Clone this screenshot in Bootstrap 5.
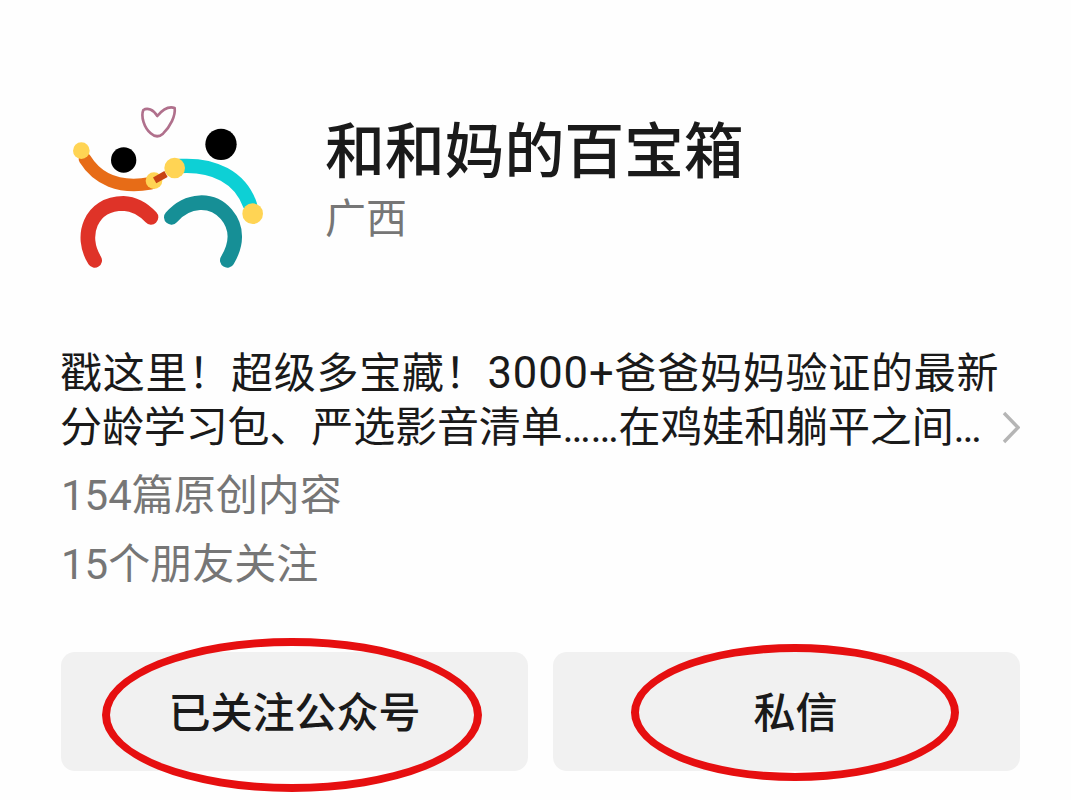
<!DOCTYPE html>
<html lang="zh-CN">
<head>
  <meta charset="UTF-8" />
  <meta name="viewport" content="width=device-width, initial-scale=1.0" />
  <title>和和妈的百宝箱</title>
  <link href="https://cdn.jsdelivr.net/npm/bootstrap@5.3.0/dist/css/bootstrap.min.css" rel="stylesheet" />
  <style>
    body {
      background-color: #fefefe;
      color: #1a1a1a;
      font-family: Roboto, "Noto Sans CJK SC", sans-serif;
      font-size: 42px;
    }

    .profile {
      height: 800px;
      padding: 90px 51px 0 61px;
    }

    .profile-head {
      height: 257px;
    }

    .avatar {
      width: 220px;
      height: 190px;
      margin: 5px 45px 0 -1px;
    }

    .account-name {
      font-size: 60px;
      font-weight: 500;
      line-height: 80px;
      letter-spacing: -0.2px;
      margin: 23px 0 0;
    }

    .region {
      font-size: 41px;
      line-height: 52px;
      color: #767676;
    }

    .intro {
      line-height: 54px;
      white-space: nowrap;
    }

    .intro-first {
      height: 54px;
      margin-left: -1px;
      letter-spacing: 0.75px;
    }

    .intro-first span {
      font-size: 43.5px;
      letter-spacing: 0.9px;
    }

    .intro-second {
      margin-left: -1px;
      letter-spacing: -0.12px;
    }

    .meta {
      height: 69px;
      line-height: 69px;
      color: #767676;
      white-space: nowrap;
    }

    .meta-list {
      padding-top: 6px;
    }

    .actions {
      gap: 25px;
      margin-top: 53px;
    }

    .btn-action {
      height: 119px;
      border: 0;
      border-radius: 14px;
      background-color: #f1f1f1;
      color: #1a1a1a;
      font-size: 42px;
      font-weight: 500;
      padding: 10px 0 6px;
    }

    .btn-message {
      padding-left: 18px;
    }

    .ring {
      border: 8px solid #e60f10;
      border-radius: 50%;
      pointer-events: none;
    }

    .ring-follow {
      left: 41px;
      top: -14px;
      width: 380px;
      height: 154px;
    }

    .ring-message {
      left: 78px;
      top: -8px;
      width: 328px;
      height: 137px;
    }
  </style>
</head>
<body>

  <main class="profile">
    <!-- Avatar e nome -->
    <header class="profile-head d-flex align-items-start">
      <svg class="avatar flex-shrink-0" viewBox="0 0 660 570" fill="none" stroke-linecap="round">
        <path d="M292 63 C280 43 262 37 250 45 C242 64 252 98 272 115 Q291 132 309 116 C331 94 347 63 344 39 C326 33 306 46 292 63Z" stroke="#b0708c" stroke-width="8" stroke-linejoin="round" />
        <circle cx="191" cy="195" r="38" fill="#000" />
        <circle cx="483" cy="148" r="47" fill="#000" />
        <path d="M75 192 C112 252 178 282 272 265" stroke="#e76c17" stroke-width="38" />
        <circle cx="64" cy="167" r="25" fill="#ffd454" />
        <circle cx="282" cy="257" r="25" fill="#ffd454" />
        <path d="M360 213 C462 207 541 247 570 330" stroke="#0dd0d5" stroke-width="43" />
        <circle cx="344" cy="219" r="31" fill="#ffd454" />
        <circle cx="578" cy="356" r="31" fill="#ffd454" />
        <path d="M284 256 L318 237" stroke="#c84314" stroke-width="20" stroke-linecap="butt" />
        <path d="M104 496 C58 424 91 325 190 325 Q236 327 273 367" stroke="#df3328" stroke-width="44" />
        <path d="M334 367 C383 311 457 309 499 358 C534 399 530 450 502 496" stroke="#168f96" stroke-width="44" />
      </svg>
      <div>
        <h1 class="account-name">和和妈的百宝箱</h1>
        <div class="region">广西</div>
      </div>
    </header>

    <!-- Descrição -->
    <section class="d-flex align-items-end justify-content-between">
      <div class="intro">
        <div class="intro-first">戳这里！超级多宝藏！<span>3000+</span>爸爸妈妈验证的最新</div>
        <div class="intro-second">分龄学习包、严选影音清单……在鸡娃和躺平之间…</div>
      </div>
      <svg class="flex-shrink-0 mb-2" width="18" height="38" viewBox="0 0 18 38" fill="none" stroke="#b5b5b5" stroke-width="3.4">
        <path d="M2 4 L16 18.500 L2 33" />
      </svg>
    </section>

    <div class="meta-list">
      <div class="meta">154篇原创内容</div>
      <div class="meta">15个朋友关注</div>
    </div>

    <!-- Botões -->
    <div class="actions d-flex">
      <div class="position-relative flex-fill w-50">
        <button type="button" class="btn btn-action w-100">已关注公众号</button>
        <span class="ring ring-follow position-absolute"></span>
      </div>
      <div class="position-relative flex-fill w-50">
        <button type="button" class="btn btn-action btn-message w-100">私信</button>
        <span class="ring ring-message position-absolute"></span>
      </div>
    </div>
  </main>

  <script src="https://cdn.jsdelivr.net/npm/bootstrap@5.3.0/dist/js/bootstrap.bundle.min.js"></script>
</body>
</html>
